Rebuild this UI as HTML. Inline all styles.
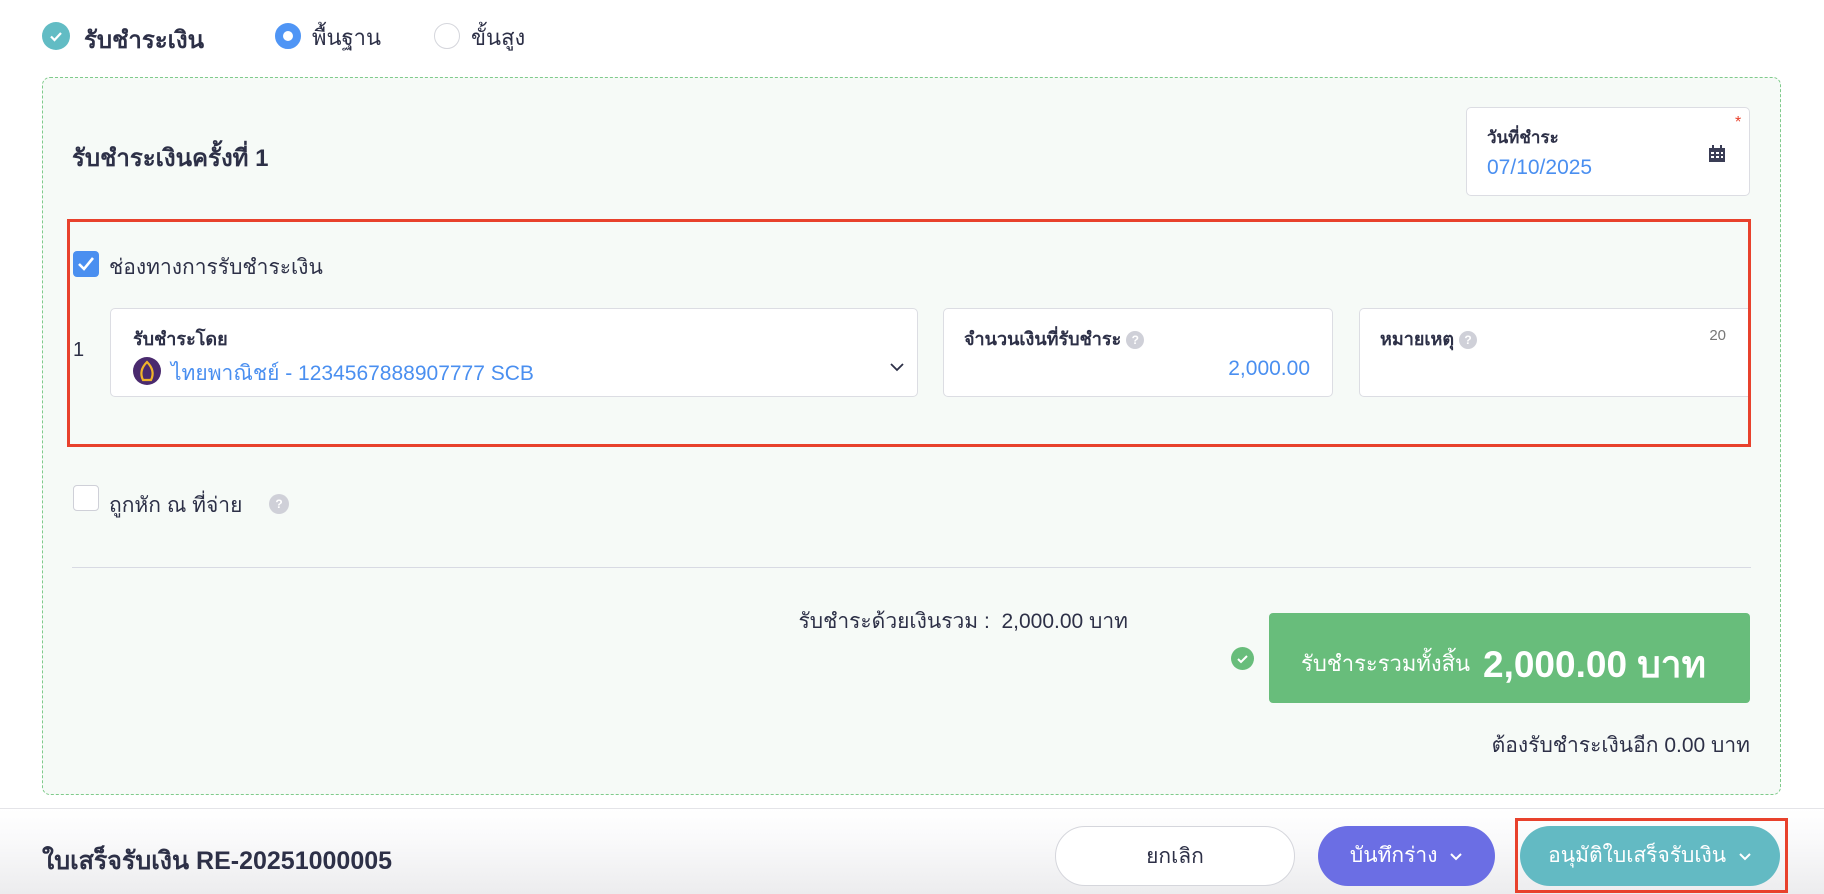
<!DOCTYPE html>
<html><head><meta charset="utf-8"><style>
*{box-sizing:border-box;margin:0;padding:0}
body{width:1824px;height:894px;overflow:hidden;background:#fff;font-family:"Liberation Sans","Noto Sans CJK SC",sans-serif;color:#2d3047;position:relative}
.a{position:absolute}
.field{position:absolute;background:#fff;border:1px solid #dcdde3;border-radius:5px}
.lbl{font-weight:bold;font-size:18px;color:#2d3047}
.q{display:inline-block;width:18px;height:18px;border-radius:50%;background:#cfd0d8;color:#fff;font-size:12px;font-weight:bold;text-align:center;line-height:18px;vertical-align:middle}
.btn{position:absolute;border-radius:30px;text-align:center;font-size:21px;line-height:60px}
</style></head><body>
<div class="a" style="left:42px;top:22px;width:28px;height:28px;border-radius:50%;background:#62bcc4"><svg width="28" height="28"><path d="M9 14.5l3.5 3.5 6.5-7" stroke="#fff" stroke-width="2.2" fill="none"/></svg></div>
<div class="a" style="left:84px;top:20px;font-size:24px;font-weight:bold">รับชำระเงิน</div>
<div class="a" style="left:275px;top:23px;width:26px;height:26px;border-radius:50%;border:8px solid #4f95f5;background:#fff"></div>
<div class="a" style="left:312px;top:20px;font-size:22px">พื้นฐาน</div>
<div class="a" style="left:434px;top:23px;width:26px;height:26px;border-radius:50%;border:1px solid #d5d6dc;background:#fff"></div>
<div class="a" style="left:471px;top:20px;font-size:22px">ขั้นสูง</div>
<div class="a" style="left:42px;top:77px;width:1739px;height:718px;border:1px dashed #7fcb8b;border-radius:8px;background:#f6faf7"></div>
<div class="a" style="left:72px;top:138px;font-size:24px;font-weight:bold">รับชำระเงินครั้งที่ 1</div>
<div class="field" style="left:1466px;top:107px;width:284px;height:89px">
<div class="a lbl" style="left:20px;top:16px;font-size:17px">วันที่ชำระ</div>
<div class="a" style="left:20px;top:48px;font-size:21px;color:#4a8ff0">07/10/2025</div>
<div class="a" style="left:268px;top:6px;color:#e8412c;font-size:16px">*</div>
<svg class="a" style="left:240px;top:36px" width="20" height="20"><rect x="2" y="4" width="16" height="14" fill="#3a3d55"/><rect x="5" y="1" width="2" height="4" fill="#3a3d55"/><rect x="13" y="1" width="2" height="4" fill="#3a3d55"/><g fill="#fff"><rect x="4" y="8" width="3" height="2"/><rect x="9" y="8" width="3" height="2"/><rect x="14" y="8" width="2" height="2"/><rect x="4" y="12" width="3" height="2"/><rect x="9" y="12" width="3" height="2"/><rect x="14" y="12" width="2" height="2"/></g></svg>
</div>
<div class="a" style="left:67px;top:219px;width:1684px;height:228px;border:3px solid #e8412c"></div>
<div class="a" style="left:73px;top:251px;width:26px;height:26px;border-radius:4px;background:#4a8ff0"><svg width="26" height="26"><path d="M6 13l5 5 9-11" stroke="#fff" stroke-width="2.6" fill="none"/></svg></div>
<div class="a" style="left:109px;top:251px;font-size:21px">ช่องทางการรับชำระเงิน</div>
<div class="a" style="left:73px;top:339px;font-size:20px">1</div>
<div class="field" style="left:110px;top:308px;width:808px;height:89px">
<div class="a lbl" style="left:22px;top:15px">รับชำระโดย</div>
<div class="a" style="left:22px;top:48px;width:28px;height:28px;border-radius:50%;background:#4a2a6e"><svg width="28" height="28"><path d="M14 5c-6 6-7 12-4 18h8c3-6 2-12-4-18z" stroke="#f0b429" stroke-width="2.2" fill="none"/></svg></div>
<div class="a" style="left:60px;top:48px;font-size:21px;color:#4a8ff0">ไทยพาณิชย์ - 1234567888907777 SCB</div>
<svg class="a" style="left:778px;top:52px" width="16" height="12"><path d="M2 3l6 6 6-6" stroke="#2d3047" stroke-width="1.8" fill="none"/></svg>
</div>
<div class="field" style="left:943px;top:308px;width:390px;height:89px">
<div class="a lbl" style="left:20px;top:15px">จำนวนเงินที่รับชำระ <span class="q">?</span></div>
<div class="a" style="right:22px;top:48px;font-size:21px;color:#4a8ff0">2,000.00</div>
</div>
<div class="field" style="left:1359px;top:308px;width:389px;height:89px;border-right:none;border-radius:5px 0 0 5px">
<div class="a lbl" style="left:20px;top:15px">หมายเหตุ <span class="q">?</span></div>
<div class="a" style="right:22px;top:18px;font-size:15px;color:#777">20</div>
</div>
<div class="a" style="left:73px;top:485px;width:26px;height:26px;border-radius:4px;border:1px solid #cfd0d8;background:#fff"></div>
<div class="a" style="left:109px;top:489px;font-size:21px">ถูกหัก ณ ที่จ่าย</div>
<div class="a" style="left:269px;top:494px"><span class="q" style="width:20px;height:20px;line-height:20px">?</span></div>
<div class="a" style="left:72px;top:567px;width:1679px;height:1px;background:#d8dae3"></div>
<div class="a" style="right:696px;top:605px;font-size:21px">รับชำระด้วยเงินรวม :&nbsp; 2,000.00 บาท</div>
<div class="a" style="left:1231px;top:647px;width:23px;height:23px;border-radius:50%;background:#68bd7b"><svg width="23" height="23"><path d="M7 12l3 3 6-6" stroke="#fff" stroke-width="2" fill="none"/></svg></div>
<div class="a" style="left:1269px;top:613px;width:481px;height:90px;background:#68bd7b;border-radius:4px;color:#fff">
<span class="a" style="left:32px;top:33px;font-size:22px">รับชำระรวมทั้งสิ้น</span>
<span class="a" style="left:214px;top:22px;font-size:37px;font-weight:bold">2,000.00 บาท</span>
</div>
<div class="a" style="right:74px;top:729px;font-size:21px">ต้องรับชำระเงินอีก 0.00 บาท</div>
<div class="a" style="left:0;top:808px;width:1824px;height:86px;background:linear-gradient(#fff 0%,#f9f9fa 40%,#ececee 100%);border-top:1px solid #e4e4e8"></div>
<div class="a" style="left:42px;top:841px;font-size:25px;font-weight:bold">ใบเสร็จรับเงิน RE-20251000005</div>
<div class="btn" style="left:1055px;top:826px;width:240px;height:60px;border:1px solid #d5d6dc;background:#fff">ยกเลิก</div>
<div class="btn" style="left:1318px;top:826px;width:177px;height:60px;background:#6b6ee4;color:#fff">บันทึกร่าง &nbsp;<svg width="14" height="10"><path d="M2 2l5 5 5-5" stroke="#fff" stroke-width="2" fill="none"/></svg></div>
<div class="btn" style="left:1520px;top:826px;width:260px;height:60px;background:#63bac3;color:#fff">อนุมัติใบเสร็จรับเงิน &nbsp;<svg width="14" height="10"><path d="M2 2l5 5 5-5" stroke="#fff" stroke-width="2" fill="none"/></svg></div>
<div class="a" style="left:1515px;top:818px;width:273px;height:75px;border:3px solid #e8412c"></div>
</body></html>
